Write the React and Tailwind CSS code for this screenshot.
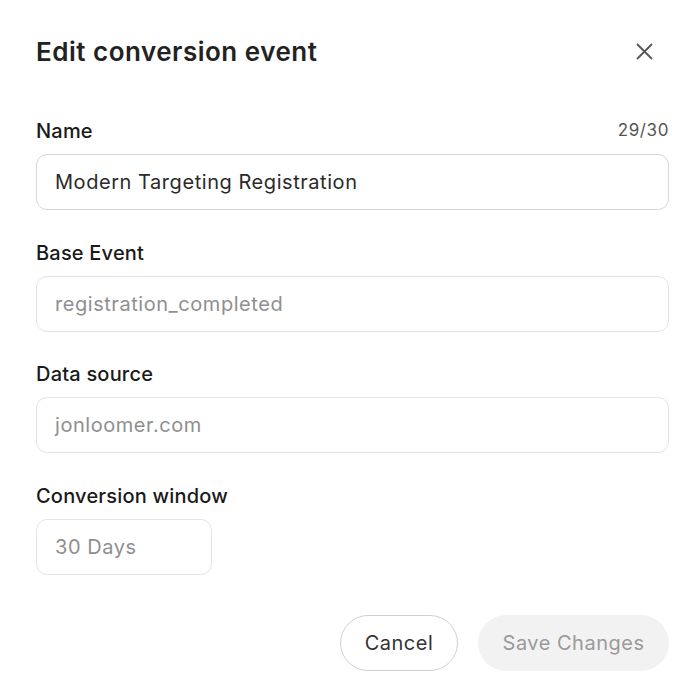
import React from "react";

function Field({ label, right, value, dark, inputClass = "" }) {
  return (
    <div className="flex flex-col">
      <div className="flex items-center justify-between h-6 mb-[11px]">
        <span className="text-[20px] font-medium text-[#1a1a1a] tracking-[0.2px] whitespace-nowrap">{label}</span>
        {right && <span className="text-[17px] text-[#555] tracking-[0.6px]">{right}</span>}
      </div>
      <div
        className={`h-[56px] rounded-[11px] border flex items-center px-[18px] text-[20px] tracking-[0.55px] ${
          dark ? "text-[#2a2a2a] border-[#d6d6d6]" : "text-[#8f8f8f] border-[#e4e4e4]"
        } ${inputClass}`}
      >
        {value}
      </div>
    </div>
  );
}

export default function App() {
  return (
    <div
      className="w-[700px] h-[692px] bg-white"
      style={{ fontFamily: "Inter, 'Noto Sans', sans-serif" }}
    >
      <div className="pl-[36px] pr-[31px] pt-[33px] pb-[22px] flex flex-col">
        <div className="flex items-center justify-between h-9">
          <h1 className="text-[26px] font-semibold text-[#222] tracking-[0.5px]">
            Edit conversion event
          </h1>
          <button className="w-8 h-8 flex items-center justify-center mr-[9px] text-[#555]">
            <svg width="17" height="17" viewBox="0 0 17 17" fill="none" stroke="currentColor" strokeWidth="1.8" strokeLinecap="round">
              <path d="M1.5 1.5 L15.5 15.5 M15.5 1.5 L1.5 15.5" />
            </svg>
          </button>
        </div>
        <div className="mt-[50px] flex flex-col gap-[30.5px]">
          <Field label="Name" right="29/30" value="Modern Targeting Registration" dark />
          <Field label="Base Event" value="registration_completed" />
          <Field label="Data source" value="jonloomer.com" />
          <Field label="Conversion window" value="30 Days" inputClass="w-[176px]" />
        </div>
        <div className="mt-[40px] flex justify-end gap-[20px]">
          <button className="h-[56px] w-[118px] rounded-full border border-[#cfcfcf] text-[20px] tracking-[0.5px] text-[#333] bg-white">
            Cancel
          </button>
          <button className="h-[56px] w-[191px] rounded-full bg-[#f2f2f2] text-[20px] tracking-[0.5px] text-[#9a9a9a]">
            Save Changes
          </button>
        </div>
      </div>
    </div>
  );
}
